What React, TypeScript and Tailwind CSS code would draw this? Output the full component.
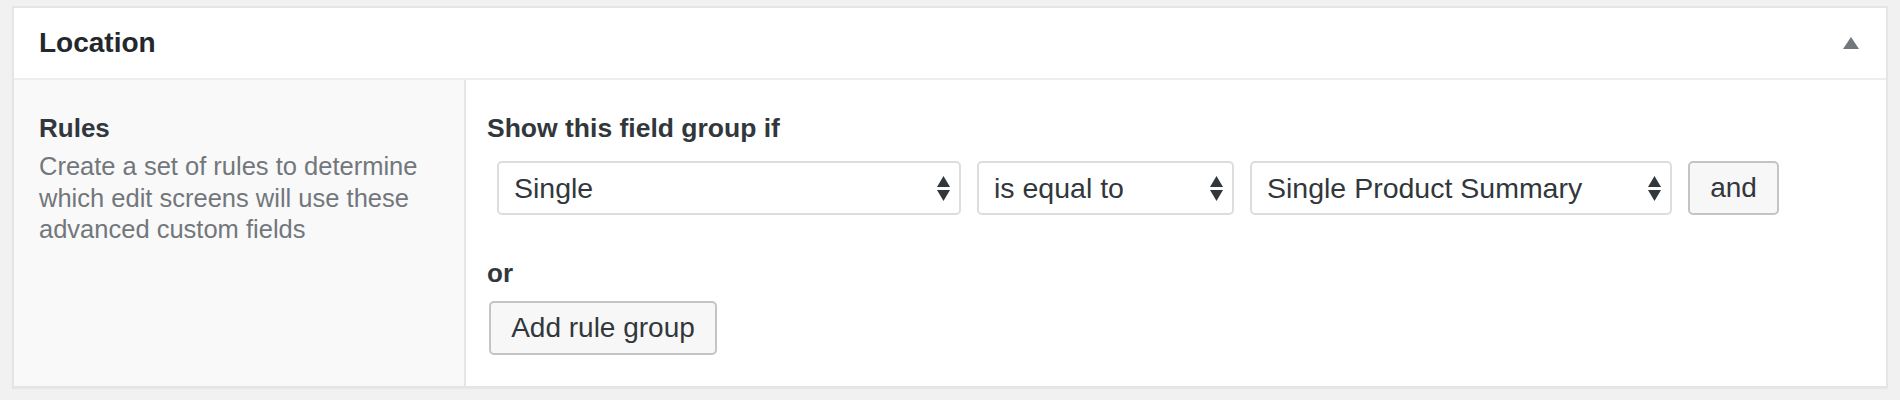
import React from 'react';

const SelectArrows = () => (
    <svg width="13" height="25" viewBox="0 0 13 25" className="shrink-0">
        <polygon points="6.5,0 13,11 0,11" fill="#32373c" />
        <polygon points="0,14 13,14 6.5,25" fill="#32373c" />
    </svg>
);

interface FakeSelectProps {
    value: string;
    className: string;
}

const FakeSelect: React.FC<FakeSelectProps> = ({ value, className }) => (
    <div
        className={`flex h-[54px] items-center justify-between rounded-[5px] border-2 border-[#dddddd] bg-white pl-[15px] pr-[9px] text-[28.5px] text-[#32373c] ${className}`}
    >
        <span className="whitespace-nowrap">{value}</span>
        <SelectArrows />
    </div>
);

export default function App() {
    return (
        <div className="min-h-[400px] bg-[#f1f1f1] px-[12px] pt-[6px] font-['Liberation_Sans',Arial,sans-serif]">
            <div className="border-2 border-[#e5e5e5] bg-white shadow-[0_1px_1px_rgba(0,0,0,0.04)]">
                {/* header */}
                <div className="flex h-[72px] items-center justify-between border-b-2 border-[#eeeeee] pl-[25px] pr-[27px]">
                    <h2 className="text-[28px] font-bold leading-[32px] text-[#23282d]">Location</h2>
                    <svg width="16" height="12" viewBox="0 0 16 12">
                        <polygon points="8,0 16,12 0,12" fill="#72777c" />
                    </svg>
                </div>

                <div className="flex">
                    {/* label column */}
                    <div className="w-[452px] shrink-0 border-r-2 border-[#e5e5e5] bg-[#f9f9f9] pl-[25px] pr-[25px] pt-[32px]">
                        <div className="text-[26px] font-bold leading-[32px] text-[#32373c]">Rules</div>
                        <p className="mt-[7px] text-[25.5px] leading-[31.7px] text-[#72777c]">
                            Create a set of rules to determine which edit screens will use these advanced custom fields
                        </p>
                    </div>

                    {/* rules column */}
                    <div className="flex-1 pb-[31px] pl-[21px] pt-[32px]">
                        <div className="text-[26.5px] font-bold leading-[32px] text-[#32373c]">Show this field group if</div>
                        <div className="mt-[17px] flex items-center gap-4 pl-[10px]">
                            <FakeSelect value="Single" className="w-[464px]" />
                            <FakeSelect value="is equal to" className="w-[257px]" />
                            <FakeSelect value="Single Product Summary" className="w-[422px]" />
                            <button className="h-[54px] w-[91px] rounded-[5px] border-2 border-[#c4c4c4] bg-[#f7f7f7] text-[28px] text-[#32373c]">
                                and
                            </button>
                        </div>
                        <div className="mt-[42px] text-[26px] font-bold leading-[32px] text-[#32373c]">or</div>
                        <button className="ml-[2px] mt-[12px] h-[54px] w-[228px] rounded-[5px] border-2 border-[#c4c4c4] bg-[#f7f7f7] text-[28px] text-[#32373c]">
                            Add rule group
                        </button>
                    </div>
                </div>
            </div>
        </div>
    );
}
